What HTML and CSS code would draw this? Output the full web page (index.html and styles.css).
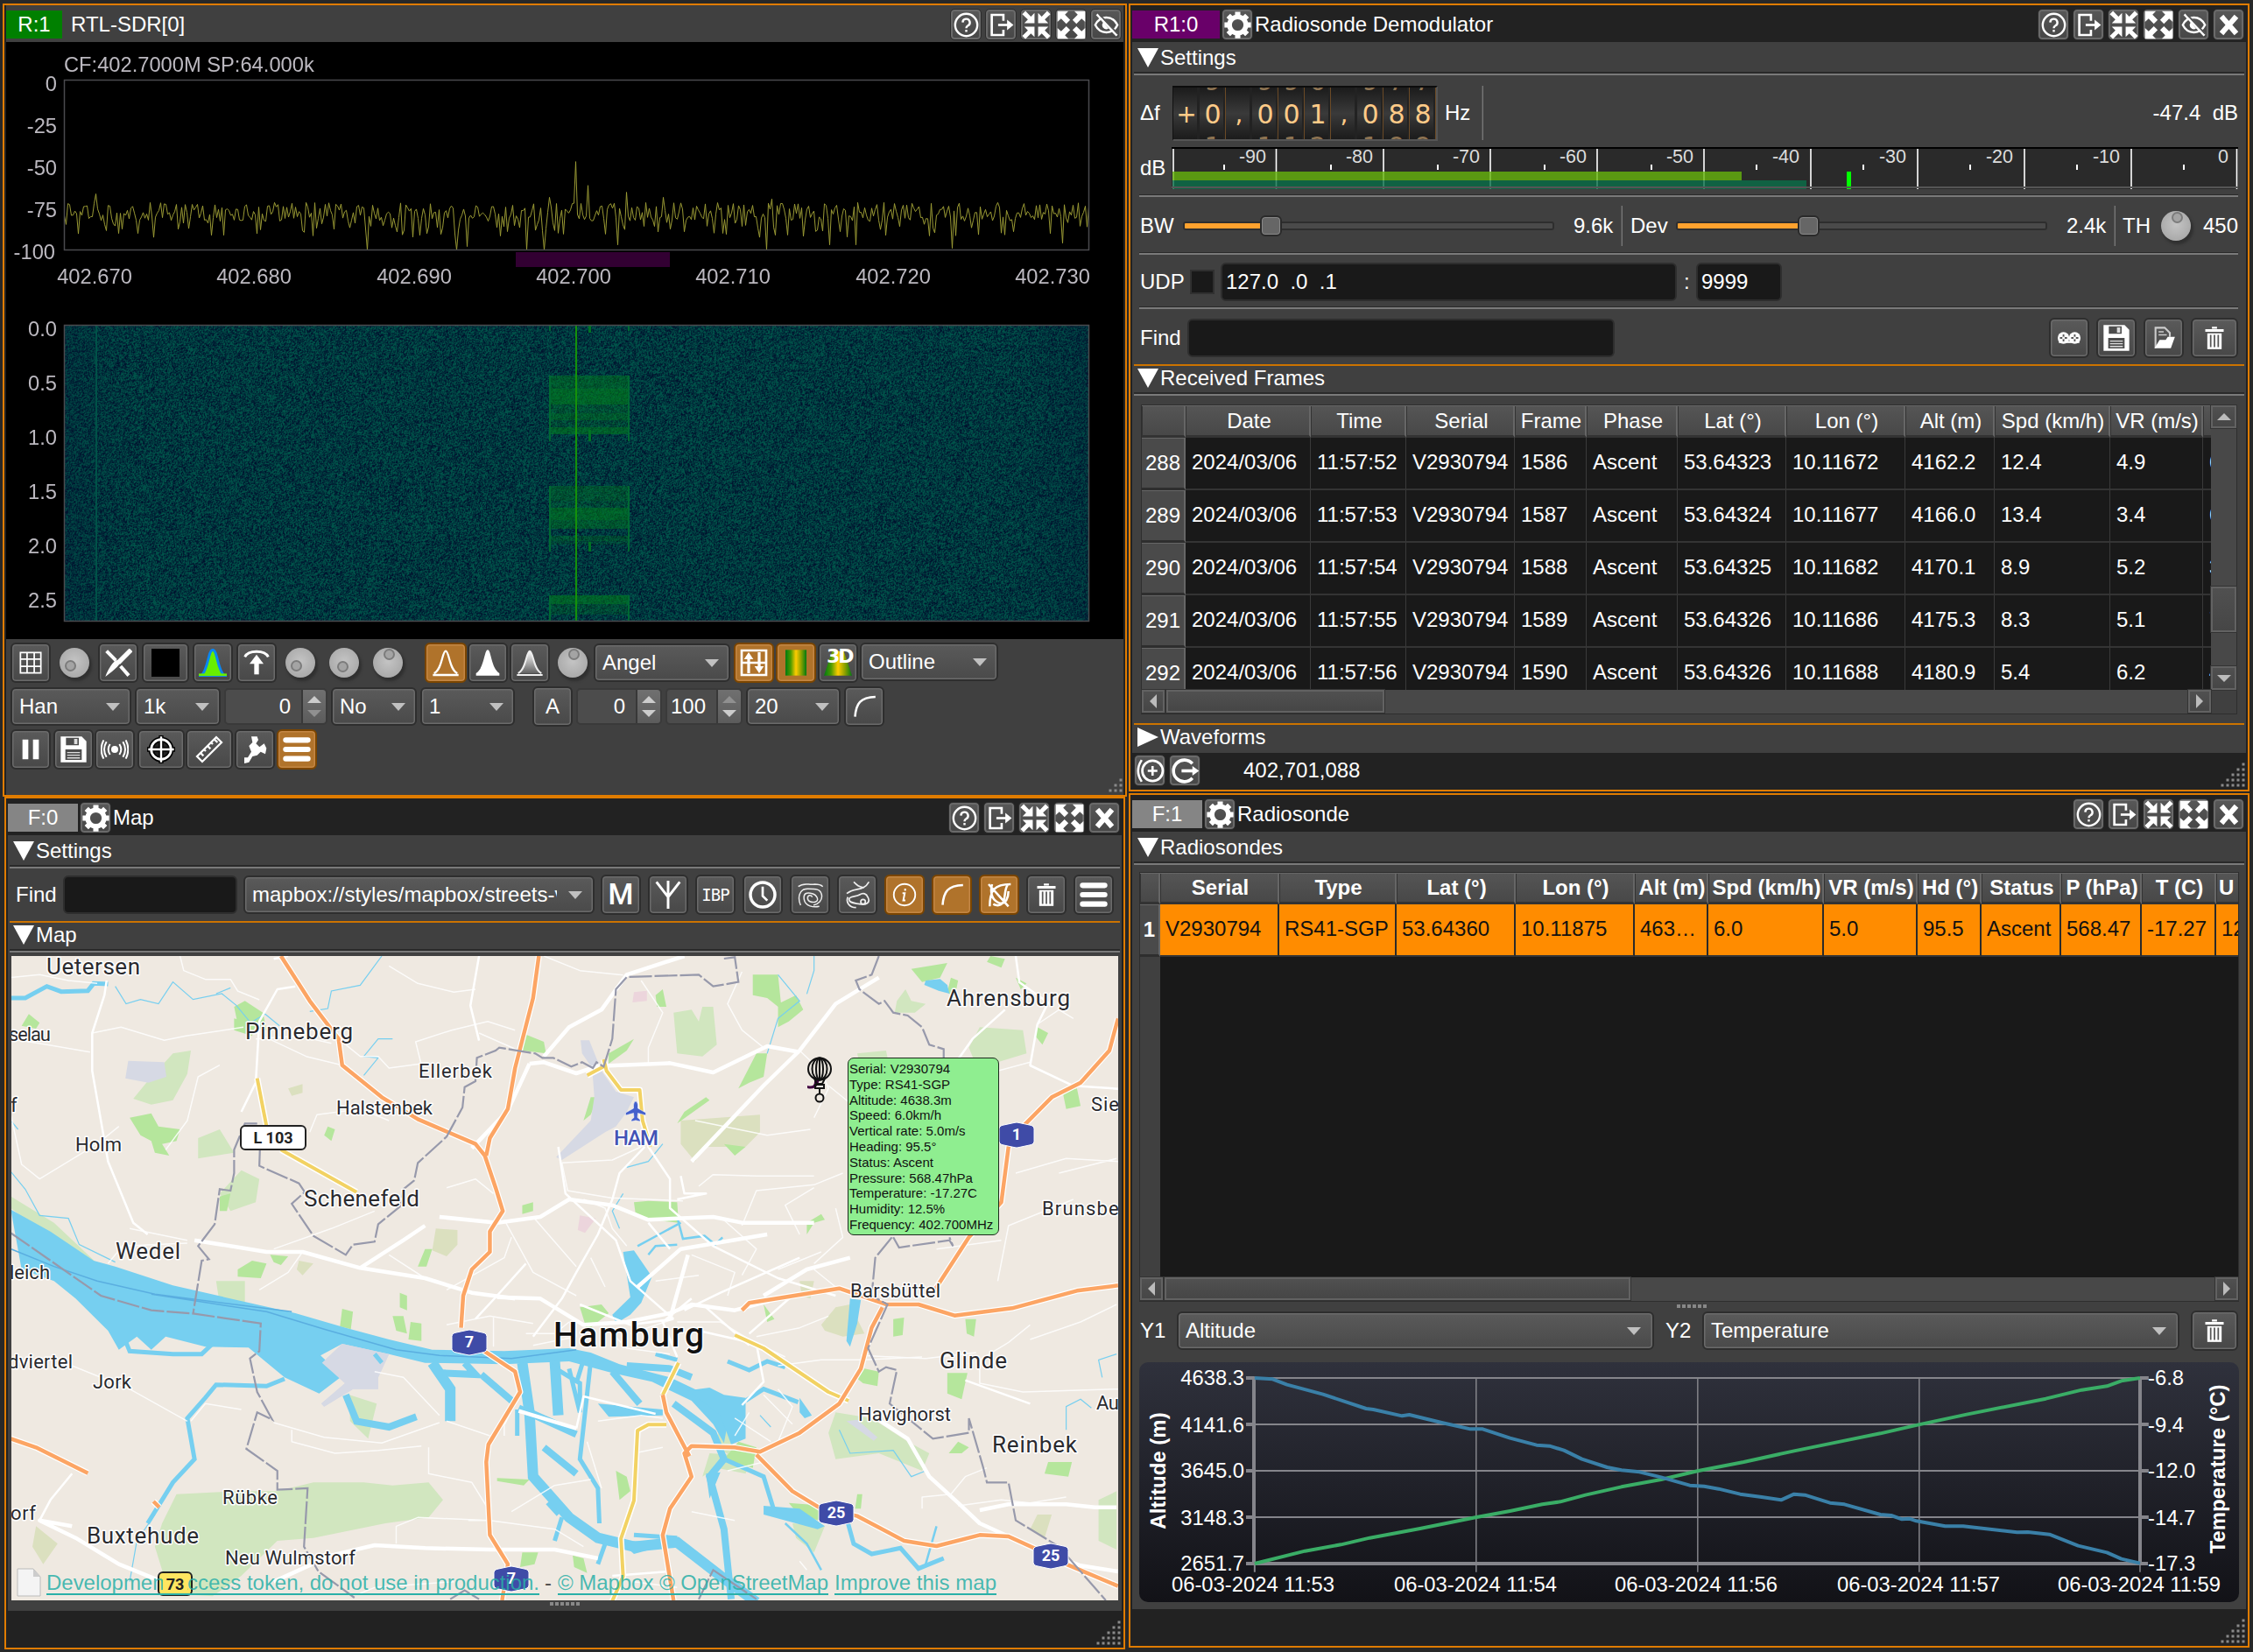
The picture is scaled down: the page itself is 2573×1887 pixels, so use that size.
FILE: index.html
```html
<!DOCTYPE html>
<html lang="en">
<head>
<meta charset="utf-8">
<title>SDR workspace</title>
<link rel="stylesheet" href="styles.css">
</head>
<body>
<svg class="defs" width="0" height="0" aria-hidden="true">
<defs>
<linearGradient id="peakFade" x1="0" y1="0" x2="0" y2="1"><stop offset="0" stop-color="#fff"/><stop offset="1" stop-color="#555"/></linearGradient>
<linearGradient id="heat"><stop offset="0" stop-color="#007a10"/><stop offset=".25" stop-color="#4a9a00"/><stop offset=".5" stop-color="#ffcc00"/><stop offset=".75" stop-color="#8aa000"/><stop offset="1" stop-color="#007a10"/></linearGradient>
<symbol id="help" viewBox="0 0 24 24"><circle cx="12" cy="12" r="10.500" fill="none" stroke="currentColor" stroke-width="2"/><path d="M8.600 9.600a3.400 3.400 0 1 1 4.800 3.200c-1 .5-1.400 1-1.400 2.300" fill="none" stroke="currentColor" stroke-width="2"/><path d="M11 16.600h2v2h-2z" fill="currentColor"/></symbol>
<symbol id="export" viewBox="0 0 24 24"><path d="M14 8V2.500H3v19h11v-5" fill="none" stroke="currentColor" stroke-width="2.200"/><path d="M9 12h10" stroke="currentColor" stroke-width="2.200"/><path d="M17.500 7l6 5-6 5z" fill="currentColor"/></symbol>
<symbol id="shrink" viewBox="0 0 24 24"><path d="M10.500 10.500V2L7.500 5 3 .3.300 3 5 7.500 2 10.500zM13.500 10.500V2l3 3L21 .3 23.700 3 19 7.500l3 3zM10.500 13.500V22l-3-3L3 23.700.3 21 5 16.500l-3-3zM13.500 13.500V22l3-3 4.500 4.700 2.700-2.700-4.700-4.500 3-3z" fill="currentColor"/></symbol>
<symbol id="expand" viewBox="0 0 24 24"><path d="M.5.5H9.500L6.700 3.500l4.300 4.300-3.200 3.200-4.300-4.300L.5 9.500zM23.500.5h-9l2.800 3L13 7.800l3.200 3.200 4.300-4.300 3 2.800zM.5 23.500h9l-2.800-3 4.300-4.300-3.200-3.200-4.300 4.300-3-2.800zM23.500 23.500h-9l2.800-3-4.300-4.300 3.200-3.200 4.300 4.300 3-2.800z" fill="currentColor"/></symbol>
<symbol id="hide" viewBox="0 0 24 24"><path d="M1.500 12C4 7 8 5 12 5s8 2 10.500 7C20 17 16 19 12 19s-8-2-10.500-7z" fill="none" stroke="currentColor" stroke-width="2"/><path d="M8 12a4 4 0 0 0 6 3.500L9 9z" fill="currentColor"/><path d="M3 2l19 20" stroke="currentColor" stroke-width="2.200"/><path d="M5 1.500l18 19" stroke="#555" stroke-width="1.500"/></symbol>
<symbol id="close" viewBox="0 0 24 24"><path d="M5 4l14 16M19 4L5 20" stroke="currentColor" stroke-width="5"/></symbol>
<symbol id="gear" viewBox="0 0 24 24"><circle cx="12" cy="12" r="6.800" fill="none" stroke="currentColor" stroke-width="4"/><path d="M12 1v4M12 19v4M1 12h4M19 12h4M4.200 4.200L7 7M17 17l2.800 2.800M4.200 19.800L7 17M17 7l2.800-2.800" stroke="currentColor" stroke-width="4.400"/></symbol>
<symbol id="grid" viewBox="0 0 24 24"><path d="M2 2h20v20H2zM2 8.500h20M2 15.500h20M8.500 2v20M15.500 2v20" fill="none" stroke="currentColor" stroke-width="1.500"/></symbol>
<symbol id="brush" viewBox="0 0 24 24"><path d="M2 2l8 8M14 15l7 8" stroke="currentColor" stroke-width="3"/><path d="M23 1L12 12" stroke="currentColor" stroke-width="4"/><path d="M13 10c2 3-3 7-12 14 2-6 6-12 9-14z" fill="currentColor"/></symbol>
<symbol id="swatch" viewBox="0 0 24 24"><path d="M0 0h24v24H0z" fill="#000"/></symbol>
<symbol id="phosphor" viewBox="0 0 24 24"><path d="M2 23C8 19 8 1 12 1s4 18 10 22z" fill="#68ee00" stroke="#0a86f2" stroke-width="2.200"/><path d="M0 22.300h24" stroke="#68ee00" stroke-width="2"/></symbol>
<symbol id="maxhold" viewBox="0 0 24 24"><path d="M2 7c3-6 17-6 20 0" fill="none" stroke="currentColor" stroke-width="2.200"/><path d="M12 22V10" stroke="currentColor" stroke-width="4"/><path d="M6 13l6-8 6 8z" fill="currentColor"/></symbol>
<symbol id="peak" viewBox="0 0 24 24"><path d="M2 21C9 18 9 2 12 2s3 16 10 19M1 22.500h22" fill="none" stroke="currentColor" stroke-width="1.700"/></symbol>
<symbol id="peakfill" viewBox="0 0 24 24"><path d="M2 23v-2C9 17 9 1 12 1s3 16 10 20v2z" fill="currentColor"/></symbol>
<symbol id="peakgrad" viewBox="0 0 24 24"><path d="M2 21C9 18 9 2 12 2s3 16 10 19M1 22.500h22" fill="url(#peakFade)" stroke="#eee" stroke-width="1.500"/></symbol>
<symbol id="updown" viewBox="0 0 24 24"><path d="M1.500 1.500h21v21h-21zM1.500 12h21" fill="none" stroke="currentColor" stroke-width="2"/><path d="M7.500 21V8M16.500 3v13" stroke="currentColor" stroke-width="2.400"/><path d="M3.500 9l4-6 4 6zM12.500 15l4 6 4-6z" fill="currentColor"/></symbol>
<symbol id="heatbar" viewBox="0 0 24 24"><path d="M3 1h18v22H3z" fill="url(#heat)"/></symbol>
<symbol id="threed" viewBox="0 0 24 24"><path d="M7 2h10l7 21H0z" fill="url(#heat)"/></symbol>
<symbol id="curve" viewBox="0 0 24 24"><path d="M3 22C4 9 8 3 23 2.500" fill="none" stroke="currentColor" stroke-width="2.200"/></symbol>
<symbol id="pause" viewBox="0 0 24 24"><path d="M5 3.500h5v17H5zM14 3.500h5v17h-5z" fill="currentColor"/></symbol>
<symbol id="save" viewBox="0 0 24 24"><path d="M1 1h18l4 4v18H1z" fill="currentColor"/><path d="M5.500 2h11v6.500h-11zM5 12h14v9H5z" fill="#4c4c4c"/><path d="M12.500 3h2.800v4.500h-2.800zM6.500 14.200h11v1h-11zM6.500 16.500h11v1h-11zM6.500 18.800h11v1h-11z" fill="#ddd"/></symbol>
<symbol id="radio" viewBox="0 0 24 24"><circle cx="12" cy="12" r="3" fill="currentColor"/><path d="M8 7.500q-3 4.500 0 9M16 7.500q3 4.500 0 9M5 5.500q-4 6.500 0 13M19 5.500q4 6.500 0 13M2.500 4q-4 8 0 16M21.500 4q4 8 0 16" fill="none" stroke="currentColor" stroke-width="1.500"/></symbol>
<symbol id="cross" viewBox="0 0 24 24"><circle cx="12" cy="12" r="8.500" fill="#222" stroke="#000" stroke-width="4.500"/><path d="M12 0v24M0 12h24" stroke="#000" stroke-width="4"/><circle cx="12" cy="12" r="8.500" fill="none" stroke="currentColor" stroke-width="2"/><path d="M12 1v22M1 12h22" stroke="currentColor" stroke-width="1.800"/></symbol>
<symbol id="ruler" viewBox="0 0 24 24"><path d="M1.500 18L18 1.500 22.500 6 6 22.500zM4.500 15l2.500 2.500M7.500 12l1.500 1.500M10.500 9l2.500 2.500M13.500 6L15 7.500M16.500 3.500L19 6" fill="none" stroke="currentColor" stroke-width="1.700"/></symbol>
<symbol id="wrench" viewBox="0 0 24 24"><path d="M3 24v-5h3l3-5-2-5 3-3-1-5 5 0 1 3-2 3 3 3 4-3 2 4-1 5-4-2-3 3-4 1-3 5z" fill="currentColor"/></symbol>
<symbol id="menu" viewBox="0 0 24 24"><path d="M2.500 4h19M2.500 12h19M2.500 20h19" stroke="currentColor" stroke-width="4.600" stroke-linecap="round"/></symbol>
<symbol id="reel" viewBox="0 0 24 24"><path d="M2 15h20v2H2z" fill="currentColor"/><circle cx="6.500" cy="12" r="5.700" fill="currentColor"/><circle cx="17.500" cy="12" r="5.700" fill="currentColor"/><path d="M6.500 8.500v7M3 12h7M17.500 8.500v7M14 12h7" stroke="#555" stroke-width="1.600"/><circle cx="6.500" cy="12" r="1.300" fill="#fff"/><circle cx="17.500" cy="12" r="1.300" fill="#fff"/></symbol>
<symbol id="folder" viewBox="0 0 24 24"><path d="M4 22V2h9l5 5v4" fill="none" stroke="#ccc" stroke-width="1.800"/><path d="M7 6h5M7 9h8" stroke="#ccc" stroke-width="1.400"/><path d="M3 22l5-8h6l2-3h7l-4 11z" fill="currentColor"/></symbol>
<symbol id="trash" viewBox="0 0 24 24"><path d="M9.500 1h5v2h-5zM3 3.500h18V6H3z" fill="currentColor"/><path d="M5 7.500h14V23H5z" fill="currentColor"/><path d="M8.300 9v12M12 9v12M15.700 9v12" stroke="#555" stroke-width="1.500"/></symbol>
<symbol id="antenna" viewBox="0 0 24 24"><path d="M12 24V0M2 1l10 13L22 1" fill="none" stroke="currentColor" stroke-width="2.200"/></symbol>
<symbol id="clock" viewBox="0 0 24 24"><circle cx="12" cy="12" r="10.500" fill="none" stroke="currentColor" stroke-width="2.600"/><path d="M12 5V13l4 4" fill="none" stroke="currentColor" stroke-width="2"/></symbol>
<symbol id="contour" viewBox="0 0 24 24"><path d="M2 5c5-4 9-1 14-2 4 0 6 1 7 2M4 21C1 14 3 7 10 7s11 0 12 5-3 8-7 9M20 22c-5 1-12 0-13-6s3-6 7-5 6 6 3 7-7 0-7-3 3-3 4-1" fill="none" stroke="currentColor" stroke-width="1.100" opacity=".9"/></symbol>
<symbol id="contour2" viewBox="0 0 24 24"><path d="M9 1c3 3 4 4 9 5M22 1c-5 9-12 4-19 10M4 14c-2 4 1 9 7 9M21 14c3 5-2 7-7 6s-9-1-9-4 6-2 9-4 6-1 7 2M15 18a2 2 0 1 0 4 0 2 2 0 1 0-4 0" fill="none" stroke="currentColor" stroke-width="1.300" opacity=".9"/></symbol>
<symbol id="info" viewBox="0 0 24 24"><circle cx="12" cy="12" r="10.500" fill="none" stroke="currentColor" stroke-width="1.600"/><path d="M12.600 6v2.200M10 10.500h2.200l-1.400 7h2" fill="none" stroke="currentColor" stroke-width="1.700"/></symbol>
<symbol id="nocurve" viewBox="0 0 24 24"><path d="M4 22C4 8 8 3 22 3M6 3c-2 7 0 14 6 16s8-5 8-10M3 3l17 19M20 3c-4 3-2 12-5 16s-8 1-8 1" fill="none" stroke="currentColor" stroke-width="1.900"/></symbol>
<symbol id="tune" viewBox="0 0 24 24"><circle cx="14" cy="12" r="8.500" fill="none" stroke="currentColor" stroke-width="2"/><path d="M14 8v8M10 12h8M5 3Q-1 12 5 21" fill="none" stroke="currentColor" stroke-width="1.900"/></symbol>
<symbol id="goto" viewBox="0 0 24 24"><path d="M18 6A9 9 0 1 0 18 18" fill="none" stroke="currentColor" stroke-width="2.600"/><path d="M9 12h11" stroke="currentColor" stroke-width="2.600"/><path d="M18 8l5.500 4-5.500 4z" fill="currentColor"/></symbol>
</defs>
</svg>

<main class="desktop">

<!-- Spectrum device window -->
<section class="win win-spectrum">
  <header class="titlebar light">
    <span class="badge green">R:1</span><h2 class="gap-l">RTL-SDR[0]</h2>
    <nav class="tools"><b class="tb"><svg><use href="#help"/></svg></b><b class="tb"><svg><use href="#export"/></svg></b><b class="tb"><svg class="big"><use href="#shrink"/></svg></b><b class="tb"><svg class="big"><use href="#expand"/></svg></b><b class="tb"><svg><use href="#hide"/></svg></b></nav>
  </header>
  <div class="plot">
    <canvas id="plot" width="1276" height="682"></canvas>
    <svg viewBox="7 48 1276 682" width="1276" height="682" class="plot-axes">
      <path d="M73.500 91.500h1170v194h-1170zM73.500 371.500h1170v338h-1170z" fill="none" stroke="#4a4a4e" stroke-width="1.500"/>
      <path d="M589 288h176v17H589z" fill="#320032"/>
      <text x="73" y="82">CF:402.7000M SP:64.000k</text>
      <g text-anchor="end"><text x="65" y="104">0</text><text x="65" y="152">-25</text><text x="65" y="200">-50</text><text x="65" y="248">-75</text><text x="63" y="296">-100</text>
      <text x="65" y="384">0.0</text><text x="65" y="446">0.5</text><text x="65" y="508">1.0</text><text x="65" y="570">1.5</text><text x="65" y="632">2.0</text><text x="65" y="694">2.5</text></g>
      <g text-anchor="middle"><text x="108" y="324">402.670</text><text x="290" y="324">402.680</text><text x="473" y="324">402.690</text><text x="655" y="324">402.700</text><text x="837" y="324">402.710</text><text x="1020" y="324">402.720</text><text x="1202" y="324">402.730</text></g>
    </svg>
  </div>
  <div class="panel spectrum-controls">
    <div class="ctl ctl-1">
      <b class="btn"><svg><use href="#grid"/></svg></b><i class="knob center"></i><b class="btn"><svg class="lg"><use href="#brush"/></svg></b><b class="btn w54"><svg class="sw"><use href="#swatch"/></svg></b><b class="btn"><svg class="lg"><use href="#phosphor"/></svg></b><b class="btn"><svg class="lg"><use href="#maxhold"/></svg></b><i class="knob"></i><i class="knob mid"></i><i class="knob top"></i><b class="btn on w48"><svg class="lg"><use href="#peak"/></svg></b><b class="btn"><svg class="lg"><use href="#peakfill"/></svg></b><b class="btn"><svg class="lg"><use href="#peakgrad"/></svg></b><i class="knob top"></i><span class="combo w156">Angel</span><b class="btn on"><svg class="lg"><use href="#updown"/></svg></b><b class="btn on"><svg class="lg"><use href="#heatbar"/></svg></b><b class="btn"><svg class="lg"><use href="#threed"/></svg><em class="d3">3D</em></b><span class="combo w158 up">Outline</span>
    </div>
    <div class="ctl ctl-2">
      <span class="combo">Han</span><span class="combo">1k</span><span class="spin dn-off">0<i></i></span><span class="combo">No</span><span class="combo scale">1</span><b class="btn">A</b><span class="spin">0<i></i></span><span class="spin up-off">100<i></i></span><span class="combo">20</span><b class="btn"><svg><use href="#curve"/></svg></b>
    </div>
    <div class="ctl ctl-3">
      <b class="btn"><svg class="lg"><use href="#pause"/></svg></b><b class="btn"><svg class="lg"><use href="#save"/></svg></b><b class="btn"><svg class="lg"><use href="#radio"/></svg></b><b class="btn w54"><svg class="lg"><use href="#cross"/></svg></b><b class="btn w54"><svg class="lg"><use href="#ruler"/></svg></b><b class="btn"><svg class="lg"><use href="#wrench"/></svg></b><b class="btn on"><svg class="lg"><use href="#menu"/></svg></b>
    </div>
  </div>
  <svg class="grip" viewBox="0 0 18 18" width="18" height="18"><path d="M14 2h0M8 8h0M14 8h0M2 14h0M8 14h0M14 14h0"/></svg>
</section>

<!-- Demodulator window -->
<section class="win win-demod">
  <header class="titlebar">
    <span class="badge purple">R1:0</span><b class="tb gearbtn"><svg class="big"><use href="#gear"/></svg></b><h2>Radiosonde Demodulator</h2>
    <nav class="tools"><b class="tb"><svg><use href="#help"/></svg></b><b class="tb"><svg><use href="#export"/></svg></b><b class="tb"><svg class="big"><use href="#shrink"/></svg></b><b class="tb"><svg class="big"><use href="#expand"/></svg></b><b class="tb"><svg><use href="#hide"/></svg></b><b class="tb"><svg><use href="#close"/></svg></b></nav>
  </header>
  <div class="panel">
    <h3 class="fold">Settings</h3>
    <div class="row row-freq">
      <label>Δf</label>
      <div class="wheel"><span class="plain">+</span><span data-up="9" data-down="1">0</span><span class="plain">,</span><span data-up="9" data-down="1">0</span><span data-up="9" data-down="1">0</span><span data-up="0" data-down="2">1</span><span class="plain">,</span><span data-up="9" data-down="1">0</span><span data-up="7" data-down="9">8</span><span data-up="7" data-down="9">8</span></div>
      <span class="unit">Hz</span><i class="vline"></i><span class="power">-47.4&nbsp; dB</span>
    </div>
    <div class="row row-meter">
      <label>dB</label>
      <svg class="meter" viewBox="1338 168 1218 48" width="1218" height="48">
        <path d="M1338 168h1218v48H1338z" fill="#2a2a2a"/><path d="M1338 169h1218" stroke="#000" stroke-width="2"/>
        <path d="M1340 170v46M1457.500 170v46M1580 170v46M1702 170v46M1824 170v46M1946 170v46M2068 170v46M2190 170v46M2312 170v46M2434 170v46M2554.500 170v46" stroke="#fff" stroke-width="1.600"/>
        <path d="M1398 188v6M1520 188v6M1642 188v6M1764 188v6M1886 188v6M2006 188v6M2128 188v6M2250 188v6M2372 188v6M2494 188v6" stroke="#fff" stroke-width="2"/>
        <path d="M1339 196h650v10h-650z" fill="#67b50ccc"/><path d="M1339 206h724v10h-724z" fill="#0a704acc"/>
        <path d="M2111.500 196v20" stroke="#0f0" stroke-width="5"/><path d="M1338 214h1218" stroke="#555" stroke-width="2"/>
        <g text-anchor="end"><text x="1446" y="186">-90</text><text x="1568" y="186">-80</text><text x="1690" y="186">-70</text><text x="1812" y="186">-60</text><text x="1934" y="186">-50</text><text x="2055" y="186">-40</text><text x="2177" y="186">-30</text><text x="2299" y="186">-20</text><text x="2421" y="186">-10</text><text x="2545" y="186">0</text></g>
      </svg>
    </div>
    <hr>
    <div class="row row-bw">
      <label>BW</label><div class="slider s1"><i></i></div><span class="val">9.6k</span><i class="vline"></i><label class="dev">Dev</label><div class="slider s2"><i></i></div><span class="val">2.4k</span><i class="vline"></i><label class="th">TH</label><i class="knob top"></i><span class="thv">450</span>
    </div>
    <hr>
    <div class="row row-udp">
      <label>UDP</label><i class="check"></i><span class="input ip">127.0&nbsp; .0&nbsp; .1</span><span class="colon">:</span><span class="input port">9999</span>
    </div>
    <hr>
    <div class="row row-find">
      <label>Find</label><span class="input"></span><div class="actions"><b class="btn"><svg><use href="#reel"/></svg></b><b class="btn"><svg class="lg"><use href="#save"/></svg></b><b class="btn"><svg><use href="#folder"/></svg></b><b class="btn w54"><svg><use href="#trash"/></svg></b></div>
    </div>
    <h3 class="fold split">Received Frames</h3>
    <div class="frames">
      <div class="view">
      <table>
        <colgroup><col class="c0"><col class="c1"><col class="c2"><col class="c3"><col class="c4"><col class="c5"><col class="c6"><col class="c7"><col class="c8"><col class="c9"><col class="c10"><col class="c11"></colgroup>
        <thead><tr><th></th><th>Date</th><th>Time</th><th>Serial</th><th>Frame</th><th>Phase</th><th>Lat (°)</th><th>Lon (°)</th><th>Alt (m)</th><th>Spd (km/h)</th><th>VR (m/s)</th><th class="cut">H</th></tr></thead>
        <tbody>
        <tr><th>288</th><td>2024/03/06</td><td>11:57:52</td><td>V2930794</td><td>1586</td><td>Ascent</td><td>53.64323</td><td>10.11672</td><td>4162.2</td><td>12.4</td><td>4.9</td><td>6</td></tr>
        <tr><th>289</th><td>2024/03/06</td><td>11:57:53</td><td>V2930794</td><td>1587</td><td>Ascent</td><td>53.64324</td><td>10.11677</td><td>4166.0</td><td>13.4</td><td>3.4</td><td>6</td></tr>
        <tr><th>290</th><td>2024/03/06</td><td>11:57:54</td><td>V2930794</td><td>1588</td><td>Ascent</td><td>53.64325</td><td>10.11682</td><td>4170.1</td><td>8.9</td><td>5.2</td><td>3</td></tr>
        <tr><th>291</th><td>2024/03/06</td><td>11:57:55</td><td>V2930794</td><td>1589</td><td>Ascent</td><td>53.64326</td><td>10.11686</td><td>4175.3</td><td>8.3</td><td>5.1</td><td>7</td></tr>
        <tr><th>292</th><td>2024/03/06</td><td>11:57:56</td><td>V2930794</td><td>1590</td><td>Ascent</td><td>53.64326</td><td>10.11688</td><td>4180.9</td><td>5.4</td><td>6.2</td><td>4</td></tr>
        </tbody>
      </table>
      </div>
      <div class="vbar"><b class="au"></b><b class="thumb"></b><b class="ad"></b></div>
      <div class="hbar"><b class="al"></b><b class="thumb"></b><b class="ar"></b></div>
    </div>
    <h3 class="fold split shut">Waveforms</h3>
  </div>
  <footer><b class="tb"><svg class="big"><use href="#tune"/></svg></b><b class="tb"><svg class="big"><use href="#goto"/></svg></b><span>402,701,088</span></footer>
  <svg class="grip" viewBox="0 0 30 30" width="30" height="30"><path d="M26 2h0M20 8h0M26 8h0M14 14h0M20 14h0M26 14h0M8 20h0M14 20h0M20 20h0M26 20h0M2 26h0M8 26h0M14 26h0M20 26h0M26 26h0"/></svg>
</section>

<!-- Map window -->
<section class="win win-map">
  <header class="titlebar">
    <span class="badge gray">F:0</span><b class="tb gearbtn"><svg class="big"><use href="#gear"/></svg></b><h2>Map</h2>
    <nav class="tools"><b class="tb"><svg><use href="#help"/></svg></b><b class="tb"><svg><use href="#export"/></svg></b><b class="tb"><svg class="big"><use href="#shrink"/></svg></b><b class="tb"><svg class="big"><use href="#expand"/></svg></b><b class="tb"><svg><use href="#close"/></svg></b></nav>
  </header>
  <div class="panel">
    <h3 class="fold">Settings</h3>
    <div class="row row-mapfind">
      <label>Find</label><span class="input"></span><span class="combo"><span>mapbox://styles/mapbox/streets-v12</span></span>
      <div class="actions"><b class="btn"><em class="mm">M</em></b><b class="btn"><svg class="lg"><use href="#antenna"/></svg></b><b class="btn"><em class="ibp">IBP</em></b><b class="btn"><svg class="lg"><use href="#clock"/></svg></b><b class="btn"><svg class="lg"><use href="#contour"/></svg></b><b class="btn"><svg class="lg"><use href="#contour2"/></svg></b><b class="btn on"><svg><use href="#info"/></svg></b><b class="btn on"><svg><use href="#curve"/></svg></b><b class="btn on"><svg class="lg"><use href="#nocurve"/></svg></b><b class="btn"><svg><use href="#trash"/></svg></b><b class="btn"><svg class="lg"><use href="#menu"/></svg></b></div>
    </div>
    <h3 class="fold split">Map</h3>
    <div class="map">
      <svg viewBox="13 1092 1264 736" width="1264" height="736">
        <path d="M0 1080h1290v760H0z" fill="#efe9e1"/>
        <g transform="translate(0 1080) scale(.8227 .33333)" class="geo">
          <g class="park">
            <path d="M240 370l25-10-5 80-20 90-30 15-25-20 20-60zM935 230l25-10 10 40 5-50 15 0 5 130-20 40-35-10zM1360 280l60 10 5 80-40 30-10 100-30 30-10-60 20-60-10-60zM1245 190l12-40 8 40 20 10-15 30-28 0zM335 770l25 30-5 80-35 30-15-60zM275 660l30-30 20 80-50 20zM1190 370l40-10 5 60-40 10zM300 1150l40 0 0 100-35-20zM15 860l60 90 60 140-30-20-90-170z"/>
            <path d="M245 1880l80-10 60 0 50-30 70 0 40 10 50-10 20 60-20 60-60 20-100 50-50 10-50 120-40 70-60-10-20-160 10-80zM485 1540l38 30-12 120-25-60zM985 1740l60 10-10 60-40-20-20 30zM1160 1600l50 20 50 80 30 40-10 60-60-60-60 20-10-90zM1000 1600l20 60-5 90-20-30zM290 1285l75 10 0 50-70-15zM120 1215l50 10-15 50-30-20zM1100 1980l45 10-15 90-25-50zM1525 1900l25-30v200l-25-30z"/>
          </g>
          <g class="khaki"><path d="M945 600l110-20 0 60-20 50-60 0-10 50-20-60zM400 490l20-15 0 30-15 10zM605 970l30 5 0 50-15 40-20-20zM50 1990l30 60-20 70-15-60zM1140 1300l20-60 20-10 20 100-30 10-25-20zM415 1080l20 10-15 40-8-20zM1110 1150l20 0-5 60-12-10zM1440 1950l20 0-10 80-20-30z"/></g>
          <g class="wood">
            <path d="M325 210l15-20 25 40 5 60-40-20zM325 250l30 20-5 40-25-20zM40 235l15 30-5 20-20-10zM180 590l30-15 10 45 30 10-5 40-20 10 10 40-20-10-5-40-15-20zM455 620l10 10-5 40-10-20zM725 300l30 30 3 40-32-10zM1045 100l35 0 5 120-20-40-20-10zM1265 80l50-20-10 50-25 15zM1320 110l10 10-5 60-10-20zM910 170l10-20 5 60-13 0zM845 370l35-50-10 40-25 45zM880 880l20-5 40 5 2 70-40-10-20-25zM950 570l30-50 5 10-45 80zM1050 370l15 0-5 80-20 20-15 20zM1005 680l30 10-15 30zM330 1110l20-30 20 10-8 50-32-5zM375 1060l25 5-10 30-10-10zM590 1040l10 0-8 60-12 0zM555 1190l10 10 0 50-10-10zM725 890l15-10 0 30-15 10zM1120 950l20-30 5 20-15 10-10 40zM1440 280l15 20-8 40-10-30zM1475 500l20-10 5 60-20 10zM305 860l15-10-5 60-10 0zM1410 110l15 20-8 20zM1375 36l20 10-5 30-20-20zM1080 200l25-30 10 50-20 40-15 20zM820 520l10 0-10 60-10 20z"/>
            <path d="M475 1245l15 10-3 60-15-10zM545 1270l15 0 5 60-15-10zM570 1290l15 5v60l-18-5zM805 1240l30-10 10 30-30 60zM1240 1280l15-5-2 60-13 5zM1340 1280l15 0-3 60-10-10zM1315 1465l28 0-8 90-20-20zM1200 1450l20 10-2 50-20-10-10-20zM1330 1700l15 20-10 20-18 0zM1455 1770l33 0-5 50-33-10zM690 1825l45 5-8 20-37-15zM855 1800l15 20 5 50-15 30zM725 2080l22 0-5 40-20 10zM1095 1910l50 10-10 50-30-30zM1190 1880l7 0-2 50-8 0zM795 2090l15 10 5 50-18-20zM1060 1230l15 50-10 10zM1005 1760l20-60 25 20-5 70z"/>
          </g>
          <g class="pink"><path d="M880 160l18-5 0 35-20 5zM805 925l22 10-15 50-10-10z"/></g>
          <g class="aero"><path d="M806 325h12l17 105 20 70 25 20-10 50-15 50-15 20-60 95-8-10 48-125 5-80-3-100-14-50zM178 395l50 5 3 50-25 20-32-15zM475 1365l65 35-15 80 0 40-35 0-40 60-4-10 33-70-32-70zM1175 1630l15-5 28 60-5 12z"/></g>
          <g class="sea">
            <path d="M15 905l55 75 60 100 30 20 80 65 170 95 70 50 60 40 60 35 100 5 90-10 30 15 40 40 70 45 60 70 20 90-5 65-15-65-30-80-55-65-55-30-60-40-90 10-110-5-50-30-65-35-30 40 30 70-32 60-48-55-50-102-60-3-55-35-20 45-20-45-25 45-15-65-45-110-30-60-45-40z"/>
            <path d="M865 1050l15-5 25 90-15 90-15 40-20 30-5-30 25-60zM1285 120l20-5 10 20 3 30-15-10-20-20zM1060 1920l50 10 35 60-10 10-75-50zM955 1525l30-10 20 25 30 10 0 140-20 20-15-100zM830 1570l90 20 0 20-75 5zM1180 1210l15 5-5 80-10 80-5-20zM980 1810l20-5-15 90zM860 2040l80 5-60 40zM1110 1550l17 60-10 10-7-20z"/>
          </g>
          <g class="aero"><path d="M475 1365l65 35-15 80 0 40-35 0-40 60-4-10 33-70-32-70z"/></g>
          <g class="chan">
            <path stroke-width="12" d="M600 1430l25 90v110M725 1430l10 170 5 220 50 140 40 70 50 30 60-15 60 115 50 90M770 1420l5 190"/>
            <path stroke-width="8" d="M850 1460l38 110M645 1430l15 40-45-5M668 1470l47 100M720 1585l80 90M480 1540l15 90 45 20 38-35M1005 1760l-20 60 20 180 10 240M935 1570l55 100 15 90M870 1440l60 10 30 30M755 1720l45 90"/>
            <path stroke-width="5" d="M820 1425l-15 335 25 100 2 120M1005 1760l55 60 15 120M1175 1960l10 90 25 35 40-20 25 70 35-35M395 1485l-25 25-70-5-15 45-25 70 10 140-30 80-35 140M15 180h20l30-40 20 18 37-3 8-25 20 2M790 1450l15 150M765 1440l40 60 0 100M175 1360l5 30 60 10 40 0 15-35M1035 1560l25-40 48 45M1010 1425l30 30 25-30 25 20M840 2050l-10 70M940 2030l-60-10M780 1960l-10 80M760 1910l15 40M718 1590l0 90M740 1600l55 60M800 1500l10-80M520 1400l10 30M910 1400l30 20"/>
            <path stroke-width="2.500" d="M940 930l8 75 30-10 15 30 10-25M945 950l-30 40-30 40M900 1060l10-30 30-5M1300 1990l-15 130M1090 1980l30 70 20 90"/>
            <path stroke-width="1.200" d="M160 140l15 60 20-15 25 15 20-75 28 60 40-20 20 40 20 60 20-30 20 40M530 36l-30 100-40 20-5 60-25 10M300 165l20-20M545 320l-20 0-20 60 20 5-20 60M865 850l-15 60 10 60M15 775l20 60 20 90 40 10 15 90 50 60M1080 100l30 90-30 60-15 120M1130 36l0 50-10 80M1165 1660l15 80 60-10 25 90 20-20M180 2180l10-140 25-90M870 760l30-20 20-60M1070 1650l-15-40M15 600l10 30M1480 1660l0-80 20-25 15 30M1530 1480l-5-60 25-20"/>
          </g>
          <path class="river" d="M210 1195l80 30 80 30 80 60 100 70 60 20 100 10 90-30M15 1040l60 60 60 50 80 45 190 60"/>
          <g class="minor">
            <path d="M250 36l5 50 30 30 35 0 10 40 30 30M15 110l40-10 40 20 40 10M128 300l40-20 60 45 30-15 80-30M355 320l60-10 45 25M470 320l30 60 25 0 15 40 45-15M585 410l-8-80 50-40 50-30 38 30M665 300l55 60M475 410l-50-30-60-70M540 70l40 60 50 30 30-10M755 36l50 50 60 15M15 320l50 20 60 25M15 580l15 170 25 50 40-60 40-60 30-60M230 700l30-100 15-150 30-40M430 640l10-60 60-20 40 40M620 830l40-30 25 50M780 745l70-10 40-45M780 745l8 95 60 25 100 10M810 870l30 30 10 70 20 60M965 600l100 50 60-20M1060 350l-30-60-20-90 20-110M1130 590l20-100-10-60-30-70M890 120l30 110-20 120 0 60M1030 960l20-120 80-20 40-40M1130 790l-80 0-60-5-20 40M1000 930l50 110-20 90M1110 990l-20-100 40-60M620 1180l80-110 10-70M700 940l40 180 60 80M740 930l60 170M540 1060l50 80M180 970l80 40M150 1090l20-60 90-10M420 1050l-20 70-40 60M380 1040l80-70 60-60M1180 540l-30-60M1440 270l30-50 20 30M1430 400l-90 60M1470 780l80-50M1410 780l70-50 72 10M1490 870l-60 60-30 30-15 190M1300 1040l90-30M1160 900l10 100-40 90M1080 1110l60-60M960 1060l60 60-10 80M910 1150l60-20M820 1070l20 100M1130 1110l30 60"/>
            <path d="M620 1300l60-30 60 25M685 1275l0 100M640 1400l-10-70M730 1330l40 0 20-40M740 1370l60-30 0-60M850 1330l20 50 60 20M935 1280l-60 50M940 1290l60 0 40 60 50 60M1050 1340l60-30 40-40M1080 1440l60-20 60 0 80-10M1195 1405l90 10 70-20M1430 1300l-30 60-40 60 0 80 60 30 132-10M1550 1230l-50 60-70 60M100 1440l80 80 80 110M265 1630l20-60 50 20M380 1635l70 50 80 20 80-70M520 1460l40 20 50 130M405 1660l0 40 60 40 60-10 60-15M595 1720l0 90 60 30 20 80M650 1970l30 0 90 30M770 1850l50-20M770 1850l-60 90M815 1700l10 80 10 80M830 1630l60-20 30 10M880 1740l40-20M1020 1620l50 80M1040 1600l-20 80M1080 1520l20 60-20 120-30 40M1100 1640l-40-100M1280 1930l0-40 40-10 20-60 30-30M1330 1920l60-20 40 10 50-20M960 1940l60 30M1010 1800l50-30M1110 2110l10 30M550 2050l0-60 30-30 100 10M770 2000l40 60M880 2180l60 20M700 1640l0 40M500 2220l20-20 110-20M620 1630l60 50"/>
          </g>
          <g class="roads">
            <path d="M148 120l-3 50-17 130v130l22 310 35 210 20 40M410 140l-25 10-25 110-5 210-20 100M400 36l-20 10M665 36l-12 170 12 120M1410 36l5 90 40 70-15 75-10 140 60 70 62 10M1395 220l-45 100-20 70M895 690l-35 90-10 90-20 120-30 130-20 90-40 130M900 690l30 110v100l60 130 90 110 80 60M775 690l10 160 70 160 20 140 60 130M940 870l40-20-30 0-5-60M930 1040l-30-90M1110 1070l-110 120-50 60M730 1090l-40 110-30 80"/>
            <path class="wide" d="M735 405l20-5 45 38 30-25 100-10 60 32 75-90 45 20M735 405l-30 160-50 130M950 36l-80 64-35 120-45 60-35 100M1220 110l-60 90-50 160-50 120-50 130-50 130M610 930l80 20 60-20 40-60 60 20 50 50 90-10 40 20 100 0M270 1010l100 40h50l80 55 90 35 65 50 60 20M500 1105l60-95 30-50M1065 990l-120 50-60 130M1060 1200l60-90 60-40M955 1060l-25 220"/>
            <path class="wide" d="M690 1205l60 5 60 90 60-10 60-30 30-30 60 20 60-40M720 1595l80 60M1210 1610l50 80 30 130 40 90 30 70 80 90 60 55 52 20M1360 1935l40-20 80 0 40 10 30 0M100 1990l0 0-45-20 50 60 60 90 60 60M380 2180l80-90 60-35 70 10 90 5 90 0 60 30"/>
            <path d="M935 1280l-60 20-70-70M940 1410l-20-120 40-80M1040 1370l-60-130M970 1320l80 45 10 130-30 80M800 1655l10-110 100 60M700 1640l10-50M100 1810l-30 90-15 70M850 2160l80-15M1430 1570l-90-80M1100 1200l-60 130"/>
          </g>
          <path class="yel case" d="M357 455l13 165M390 700l105 145M838 390l4 40 20 65h26l4 105 11 90M815 445l23-30M1020 1335l40 45 90 150 28 30M942 1430l-22 110M925 1642h-25l-15 20-5 240-18 130 3 130-15 84"/>
          <path class="yel" d="M357 455l13 165M390 700l105 145M838 390l4 40 20 65h26l4 105 11 90M815 445l23-30M1020 1335l40 45 90 150 28 30M942 1430l-22 110M925 1642h-25l-15 20-5 240-18 130 3 130-15 84"/>
          <path class="moto case" d="M390 36l40 154 40 130 5 90 55 110 50 75 80 85 13 40 15 110 10 80-18 70 0 70-25 60-12 90-3 110M748 36l-8 144-25 240-10 140-25 100-5 60M660 1370l55 90 7 70-22 90-22 90-3 60 5 250 25 100-8 124M1552 250l-12 110-40 110-40 50-40 100-20 70-10 190-45 120-50 190M1225 1240l-15 70-15 140-30 120-55 100-55 65-35-15-60-5-10 25 10 80-30 110-10 90 15 224M920 1540l5 60 32 150M1050 1745l50 125 40 60 50 25 65 85 45 18 60-38 40 5 40 45 40 50 72 75M1030 1250l10-25 125-50 65 55h45l50 38 80-25 90-60 57-18M15 1690l35 30 72 88M213 1905l8 20"/>
          <path class="moto" d="M390 36l40 154 40 130 5 90 55 110 50 75 80 85 13 40 15 110 10 80-18 70 0 70-25 60-12 90-3 110M748 36l-8 144-25 240-10 140-25 100-5 60M660 1370l55 90 7 70-22 90-22 90-3 60 5 250 25 100-8 124M1552 250l-12 110-40 110-40 50-40 100-20 70-10 190-45 120-50 190M1225 1240l-15 70-15 140-30 120-55 100-55 65-35-15-60-5-10 25 10 80-30 110-10 90 15 224M920 1540l5 60 32 150M1050 1745l50 125 40 60 50 25 65 85 45 18 60-38 40 5 40 45 40 50 72 75M1030 1250l10-25 125-50 65 55h45l50 38 80-25 90-60 57-18M15 1690l35 30 72 88M213 1905l8 20"/>
          <path class="border" d="M1005 45l15-5 5 85-35 15-20-40-100 8-15 42-5 170-12 95-10-15-5 20-15-20-15 15-25-30-15 0-10-15-50-20-5 10-26 25-2 80-15 20-3 70-22 100-40 90-5 60-15 30-5 60-30 60-5 60-30 10-10 35-45-65-30-110 18-40-8-30-55-60 2-140M357 610l-17 0-15 90 0 80-5 60-15-5-7 120-23 75 15 45-10 5-12 182M15 985l125 215 70 50 60 12 92 33-2 95-13 25 10 115 21 95-21-25-15 125 43 75 0 65 42-5-5 200 20 85 50 90M1220 36l-10 64-22 20 5 30 27 50 8-10 12 40 20 10 20 40 10 60 20 15v45M1240 1000l8 35 70-25 5 20-5-30M1238 1000l-23 70-5 130 22 30-27 150 15 80 10-15 15 10-10 115 60 120 50-20 0-50 20 170 5 50 30 0 10 130 60 90 65 184M625 2240l20-30 20 30M970 2240l20-100 60 100"/>
        </g>
        <g class="towns">
          <text x="53" y="1113" textLength="107">Uetersen</text><text x="280" y="1187" textLength="123">Pinneberg</text><text x="1081" y="1149" textLength="141">Ahrensburg</text><text x="347" y="1378" textLength="132">Schenefeld</text><text x="132" y="1438" textLength="74">Wedel</text><text x="1073" y="1563" textLength="77">Glinde</text><text x="1133" y="1659" textLength="97">Reinbek</text><text x="99" y="1763" textLength="128">Buxtehude</text>
        </g>
        <g class="towns small">
          <text x="10" y="1189" textLength="48">selau</text><text x="478" y="1231" textLength="84">Ellerbek</text><text x="384" y="1273" textLength="110">Halstenbek</text><text x="86" y="1315" textLength="53">Holm</text><text x="11" y="1461" textLength="46">leich</text><text x="1246" y="1269" textLength="32">Sie</text><text x="1190" y="1388" textLength="100">Brunsbek</text><text x="971" y="1482" textLength="103">Barsbüttel</text><text x="12" y="1270">f</text><text x="9" y="1563" textLength="74">dviertel</text><text x="106" y="1586" textLength="44">Jork</text><text x="980" y="1623" textLength="106">Havighorst</text><text x="1252" y="1610" textLength="26">Au</text><text x="254" y="1718" textLength="63">Rübke</text><text x="12" y="1736" textLength="29">orf</text><text x="257" y="1787" textLength="149">Neu Wulmstorf</text>
        </g>
        <text class="city" x="632" y="1538" textLength="172">Hamburg</text>
        <text class="airport" x="701" y="1308" textLength="51">HAM</text>
        <path class="plane" d="M726 1258q2 0 2.500 4v4l9 5v3l-9-2.500-.5 5 3 2.500v2l-5-1.200-5 1.200v-2l3-2.500-.5-5-9 2.500v-3l9-5v-4q.5-4 2.500-4z"/>
        <g class="shield">
          <rect x="275" y="1286" width="74" height="27" rx="5" fill="#fff" stroke="#222" stroke-width="2"/><text x="312" y="1306" class="dark">L 103</text>
          <g fill="#3f4ba7" stroke="#fff" stroke-width="1"><path id="hex" d="M1158 1282.500q3-1 6 0l14 3q3 1 3 4v14q0 3-3 4l-14 3q-3 1-6 0l-14-3q-3-1-3-4v-14q0-3 3-4z"/><use href="#hex" x="-625" y="237"/><use href="#hex" x="-577" y="507"/><use href="#hex" x="-206" y="432"/><use href="#hex" x="39" y="481"/></g>
          <text x="1161" y="1302">1</text><text x="536" y="1539">7</text><text x="584" y="1809">7</text><text x="955" y="1734">25</text><text x="1200" y="1783">25</text>
        </g>
        <g class="shield"><rect x="181" y="1796" width="38" height="26" rx="5" fill="#ffe560" stroke="#222" stroke-width="2"/></g>
        <g class="credit">
          <path d="M20 1792h18l8 9v22H20z" fill="#f4f4f4" stroke="#bbb"/><path d="M38 1792v9h8z" fill="#ccc"/>
          <text x="53" y="1816" textLength="563">Development access token, do not use in production.</text><text x="622" y="1816" class="dash">-</text><text x="637" y="1816" textLength="309">© Mapbox © OpenStreetMap</text><text x="953" y="1816" textLength="185">Improve this map</text>
          <path d="M53 1821h563M637 1821h309M953 1821h185" stroke="#2ab0a8" stroke-width="2"/>
        </g>
        <g class="shield"><path d="M186 1798h28v22h-28z" fill="#ffe560"/><text x="200" y="1816" class="dark">73</text></g>
        <g fill="none" stroke="#111" stroke-width="2"><path d="M922 1240q8 2 8-4t6-3l-2 6q-4 6-12 4z" fill="#400040" stroke="none"/><ellipse cx="936" cy="1221" rx="13" ry="12.500" fill="#e8e4dc"/><ellipse cx="936" cy="1221" rx="8.500" ry="12.500"/><path d="M936 1209v24"/><ellipse cx="936" cy="1221" rx="4" ry="12.500"/><path d="M930 1232l3 6h6l3-6M931 1239h10v4h-10zM936 1243v7"/><circle cx="936" cy="1254" r="4.500"/></g>
      </svg>
      <ul class="callout"><li>Serial: V2930794</li><li>Type: RS41-SGP</li><li>Altitude: 4638.3m</li><li>Speed: 6.0km/h</li><li>Vertical rate: 5.0m/s</li><li>Heading: 95.5°</li><li>Status: Ascent</li><li>Pressure: 568.47hPa</li><li>Temperature: -17.27C</li><li>Humidity: 12.5%</li><li>Frequency: 402.700MHz</li></ul>
    </div>
    <i class="splitgrip"></i>
  </div>
  <svg class="grip" viewBox="0 0 30 30" width="30" height="30"><path d="M26 2h0M20 8h0M26 8h0M14 14h0M20 14h0M26 14h0M8 20h0M14 20h0M20 20h0M26 20h0M2 26h0M8 26h0M14 26h0M20 26h0M26 26h0"/></svg>
</section>

<!-- Radiosonde feature window -->
<section class="win win-sonde">
  <header class="titlebar">
    <span class="badge gray">F:1</span><b class="tb gearbtn"><svg class="big"><use href="#gear"/></svg></b><h2>Radiosonde</h2>
    <nav class="tools"><b class="tb"><svg><use href="#help"/></svg></b><b class="tb"><svg><use href="#export"/></svg></b><b class="tb"><svg class="big"><use href="#shrink"/></svg></b><b class="tb"><svg class="big"><use href="#expand"/></svg></b><b class="tb"><svg><use href="#close"/></svg></b></nav>
  </header>
  <div class="panel">
    <h3 class="fold">Radiosondes</h3>
    <div class="sondes">
      <div class="view">
      <table>
        <colgroup><col class="c0"><col class="c1"><col class="c2"><col class="c3"><col class="c4"><col class="c5"><col class="c6"><col class="c7"><col class="c8"><col class="c9"><col class="c10"><col class="c11"><col class="c12"></colgroup>
        <thead><tr><th></th><th>Serial</th><th>Type</th><th>Lat (°)</th><th>Lon (°)</th><th>Alt (m)</th><th>Spd (km/h)</th><th>VR (m/s)</th><th>Hd (°)</th><th>Status</th><th>P (hPa)</th><th>T (C)</th><th class="cut">U (%)</th></tr></thead>
        <tbody><tr><th>1</th><td>V2930794</td><td>RS41-SGP</td><td>53.64360</td><td>10.11875</td><td>463…</td><td>6.0</td><td>5.0</td><td>95.5</td><td>Ascent</td><td>568.47</td><td>-17.27</td><td>12.5</td></tr></tbody>
      </table>
      </div>
      <div class="hbar"><b class="al"></b><b class="thumb"></b><b class="ar"></b></div>
    </div>
    <i class="splitgrip"></i>
    <div class="row row-axes"><label>Y1</label><span class="combo">Altitude</span><label class="y2">Y2</label><span class="combo">Temperature</span><b class="btn w54"><svg><use href="#trash"/></svg></b></div>
    <svg class="chart" viewBox="1301 1556 1256 274" width="1256" height="274">
      <g transform="translate(1285 1440) scale(.8214 .33333)" class="geo" fill="none">
        <path d="M168 402h1254M168 561h1254M168 720h1254M168 879h1254M180 402v665" stroke="#85858b" stroke-width="2"/>
        <path d="M488 402v665M796 402v665M1104 402v665M1411 402v665" stroke="#85858b" stroke-width="1.500"/>
        <path d="M168 1038h1254" stroke="#85858b" stroke-width="4"/><path d="M179 402v636M1411 402v636" stroke="#85858b" stroke-width="4"/>
        <path d="M168 402h12M168 561h12M168 720h12M168 879h12M1411 402h12M1411 561h12M1411 720h12M1411 879h12" stroke="#85858b" stroke-width="4"/>
        <path stroke="#3aad66" stroke-width="4" stroke-linejoin="round" d="M180 1038L250 995 300 973 340 950 410 918 487 880 535 858 580 835 605 826 640 803 690 775 745 750 797 720 860 690 930 652 1000 617 1050 592 1103 562 1170 527 1280 473 1330 443 1365 430 1385 412 1411 402"/>
        <path stroke="#3a80a8" stroke-width="4" stroke-linejoin="round" d="M180 402L205 406 225 425 275 458 335 507 345 510 385 532 395 528 440 555 480 577 497 577 535 608 572 632 590 635 610 650 635 680 670 708 690 718 715 724 745 742 785 770 805 773 825 782 855 800 885 810 912 820 930 800 945 803 980 830 1000 835 1050 870 1065 873 1080 886 1090 884 1100 892 1140 910 1165 910 1240 931 1255 930 1285 938 1325 977 1365 1000 1385 1022 1411 1037"/>
      </g>
      <g text-anchor="end"><text x="1421" y="1582">4638.3</text><text x="1421" y="1636">4141.6</text><text x="1421" y="1688">3645.0</text><text x="1421" y="1742">3148.3</text><text x="1421" y="1794">2651.7</text></g>
      <g><text x="2453" y="1582">-6.8</text><text x="2453" y="1636">-9.4</text><text x="2453" y="1688">-12.0</text><text x="2453" y="1742">-14.7</text><text x="2453" y="1794">-17.3</text></g>
      <g text-anchor="middle"><text x="1431" y="1818">06-03-2024 11:53</text><text x="1685" y="1818">06-03-2024 11:54</text><text x="1937" y="1818">06-03-2024 11:56</text><text x="2191" y="1818">06-03-2024 11:57</text><text x="2443" y="1818">06-03-2024 11:59</text>
      <text class="axis" transform="translate(1331 1680) rotate(-90)">Altitude (m)</text><text class="axis" transform="translate(2541 1678) rotate(-90)">Temperature (°C)</text></g>
    </svg>
  </div>
  <svg class="grip" viewBox="0 0 30 30" width="30" height="30"><path d="M26 2h0M20 8h0M26 8h0M14 14h0M20 14h0M26 14h0M8 20h0M14 20h0M20 20h0M26 20h0M2 26h0M8 26h0M14 26h0M20 26h0M26 26h0"/></svg>
</section>
</main>
<script src="plot.js"></script>
</body>
</html>
```
FILE: styles.css
```css
*{box-sizing:border-box}
body{margin:0;background:#282828;color:#fff;font:24px/28px "Liberation Sans",Arial,sans-serif;overflow:hidden}
h2,h3{margin:0;font:inherit}
b,i,em{font-style:normal;font-weight:normal}
svg{display:block;flex:none}
.defs{position:absolute}
.desktop{position:relative;width:2573px;height:1887px;overflow:hidden}
.win{position:absolute;display:flex;flex-direction:column;border:2px solid #e07c00;padding:0 2px;background:#222}
.win-spectrum{left:3px;top:4px;width:1284px;height:906px}
.win-demod{left:1289px;top:4px;width:1280px;height:900px}
.win-map{left:5px;top:910px;width:1280px;height:974px}
.win-sonde{left:1289px;top:906px;width:1280px;height:976px}
.panel{background:#404040}

/* title bars */
.titlebar{height:42px;flex:none;display:flex;align-items:center;padding-top:2px;background:#222}
.titlebar.light{background:#404040}
.badge{height:32px;display:flex;align-items:center;justify-content:center;width:80px}
.badge.green{background:#008000;width:64px}
.badge.purple{background:#690069;width:100px}
.badge.gray{background:#858585}
.titlebar h2{margin-left:2px;white-space:nowrap}
.titlebar h2.gap-l{margin-left:10px}
.gearbtn{margin-left:2px}
.tools{margin-left:auto;display:flex;gap:4px;padding-right:2px}
.tb{width:36px;height:36px;display:flex;align-items:center;justify-content:center;border:1px solid #2c2c2c;border-radius:5px;background:linear-gradient(#585858,#464646);box-shadow:inset 0 0 0 2px #6a6a6a}
.tb svg{width:29px;height:29px}
.tb svg.big{width:33px;height:33px}

/* generic controls */
.btn{position:relative;width:46px;height:46px;flex:none;display:flex;align-items:center;justify-content:center;border:2px solid #2e2e2e;border-radius:6px;background:linear-gradient(#5a5a5a,#484848);box-shadow:inset 0 0 0 1.5px #6b6b6b}
.btn.on{background:#b0732b;border-color:#7b4500;box-shadow:inset 0 0 0 1.5px #c48745}
.btn svg{width:28px;height:28px}
.btn svg.lg,.btn svg.sw{width:32px;height:32px}
.w48{width:48px}.w54{width:54px}
.combo{position:relative;height:44px;display:flex;align-items:center;padding-left:8px;border:2px solid #2e2e2e;border-radius:6px;background:linear-gradient(#5a5a5a,#4a4a4a);box-shadow:inset 0 0 0 1.5px #6b6b6b;white-space:nowrap}
.combo::after{content:"";margin-left:auto;margin-right:11px;border:8px solid transparent;border-top:9px solid #c0c0c0;border-bottom:0}
.combo.w156{width:156px}.combo.w158{width:158px}.combo.up{margin-top:-2px}
.spin{display:flex;align-items:center;justify-content:flex-end;height:42px;border:2px solid #3a3a3a;border-radius:5px;background:#4c4c4c}
.spin i{width:28px;height:100%;margin-left:12px;border-left:2px solid #383838;border-radius:0 4px 4px 0;background:linear-gradient(#707070,#5c5c5c);display:flex;flex-direction:column;align-items:center;justify-content:space-evenly}
.spin i::before,.spin i::after{content:"";border:8px solid transparent}
.spin i::before{border-bottom:8px solid #ccc;border-top:0}
.spin i::after{border-top:8px solid #ccc;border-bottom:0}
.spin.dn-off i::after{border-top-color:#909090}
.spin.up-off i::before{border-bottom-color:#909090}
.input{height:44px;display:flex;align-items:center;padding-left:4px;border:2px solid #2e2e2e;border-radius:6px;background:#191919}
.knob{position:relative;display:block;width:34px;height:34px;margin-left:8px;border-radius:50%;background:radial-gradient(circle at 50% 45%,#c4c4c4,#ababab 70%,#a0a0a0);box-shadow:2px 3px 3px 1px #303030}
.knob::after{content:"";position:absolute;left:6px;bottom:7px;width:9px;height:9px;border-radius:50%;border:2px solid #7c7c7c;background:#a4a4a4}
.knob.mid::after{left:9px;bottom:6px}
.knob.top::after{left:12px;bottom:20px}
.knob.center{justify-self:center;margin:0}
.grip{position:absolute;right:1px;bottom:1px}
.grip path{stroke:#8a8a8a;stroke-width:4;stroke-linecap:square;stroke-width:3}
.splitgrip{display:block;width:34px;height:4px;margin:2px auto 0;background:repeating-linear-gradient(90deg,#888 0 4px,transparent 4px 6px)}

/* section headers */
.fold{position:relative;height:38px;margin:0 2px;padding:4px 0 0 30px;border-bottom:2px solid #7a7a7a;box-shadow:inset 0 -2px #2a2a2a;line-height:28px}
.fold::before{content:"";position:absolute;left:4px;top:7px;border:12px solid transparent;border-top:22px solid #fff;border-bottom:0}
.fold.split{border-top:2px solid #cc7300;height:36px;padding-top:0}
.fold.split::before{top:3px}
.fold.shut{height:34px;border-bottom:0;box-shadow:none}
.fold.shut::before{border:11px solid transparent;border-left:24px solid #fff;border-right:0}
.row{display:flex;align-items:center;padding:0 9px}
.row label{flex:none}
hr{height:4px;margin:0 9px 0 8px;border:0;background:linear-gradient(#2a2a2a 0 1px,#7a7a7a 1px 3px,transparent 3px)}
.vline{width:2px;background:#777;border-left:1px solid #555}

/* spectrum window */
.plot{display:grid;height:682px;flex:none;background:#000}
.plot>*{grid-area:1/1}
.plot-axes text{fill:#bcb9c0;font-size:23.700px}
.spectrum-controls{height:178px;padding:2px 0 0 5px}
.ctl{display:grid;align-items:center;justify-content:start}
.ctl-1{height:50px;grid-template-columns:46px 54px 50px 58px 50px 48px 50px 50px 67px 49px 48px 47px 49px 160px 48px 48px 48px 158px}
.ctl-2{height:50px;grid-template-columns:138px 98px 118px 98px 124px 46px 98px 88px 108px 46px;column-gap:4px}
.ctl-2 .scale{width:108px}
.ctl-3{height:48px;grid-template-columns:49px 47px 49px 55px 56px 48px 47px}
.d3{position:absolute;left:8px;top:3px;font:bold 22px/22px "DejaVu Sans",sans-serif;letter-spacing:-2px}

/* demodulator window */
.row-freq{height:82px;padding-top:4px}
.row-freq label{width:37px}
.wheel{width:303px;height:63px;display:flex;border-top:2px solid #0c0c0c;border-left:1px solid #111;border-bottom:2px solid #555;border-right:2px solid #555;background:#2b2b2b;font:30px/62px "DejaVu Sans",sans-serif;color:#ffcb88;overflow:hidden}
.wheel span{position:relative;width:30px;padding-left:1px;text-align:center;border-right:1px solid #6b4a26;background:linear-gradient(#1b1b1b,#3a3a3a 50%,#1b1b1b);box-shadow:inset -2px 0 #222;overflow:hidden}
.wheel .plain{border-color:#222;font-size:28px}
.wheel span::before,.wheel span::after{position:absolute;left:1px;right:0;opacity:.5}
.wheel span[data-up]::before{content:attr(data-up);top:-38px}
.wheel span[data-down]::after{content:attr(data-down);top:37px}
.unit{margin-left:8px}
.row-freq .vline{height:62px;margin-left:13px}
.power{margin-left:auto}
.row-meter{height:54px;align-items:flex-start}
.row-meter label{padding-top:10px;width:36px}
.meter text{fill:#ddd;font-size:21.500px}
.row-bw{height:62px;padding-top:2px}
.row-bw label{width:49px}
.slider{position:relative;width:424px;height:10px;border:2px solid #2e2e2e;border-radius:3px;background:linear-gradient(90deg,#ffa22e 0 90px,#4a4a4a 90px)}
.slider.s2{background:linear-gradient(90deg,#ffa22e 0 140px,#4a4a4a 140px)}
.slider i{position:absolute;left:86px;top:-9px;width:25px;height:24px;border:2px solid #2a2a2a;border-radius:6px;background:#666;box-shadow:inset 0 0 0 1px #888}
.slider.s2 i{left:137px}
.val{width:76px;padding-left:22px}
.row-bw .vline{height:46px}
.row-bw label.dev{width:52px;margin-left:9px}
.row-bw label.th{width:38px;margin-left:8px}
.row-bw .knob{margin-left:6px}
.thv{margin-left:auto}
.row-udp{height:58px;padding-top:2px}
.row-udp label{width:57px}
.check{width:28px;height:28px;border:2px solid #303030;background:#191919}
.ip{width:521px;margin-left:7px}
.colon{width:22px;padding-left:8px}
.port{width:98px}
.row-find{height:62px;padding-top:1px}
.row-find label{width:54px}
.row-find .input{width:488px}
.actions{margin-left:auto;display:flex;gap:8px}
.frames{width:1252px;height:354px;margin:10px 0 10px 10px;border:1px solid #2e2e2e;display:grid;grid-template-columns:1221px 29px;grid-template-rows:325px 27px}
.view{overflow:hidden;background:#191919;border-top:1px solid #666}
table{table-layout:fixed;border-collapse:separate;border-spacing:0;white-space:nowrap}
th{font-weight:400;padding:0;overflow:hidden}
thead th{height:36px;text-align:center;background:linear-gradient(#555,#484848);border-right:2px solid #666;border-bottom:3px solid #333;box-shadow:inset 1px 0 #333}
td{height:60px;padding:0 0 3px 7px;border-right:1px solid #3a3a3a;border-bottom:2px solid #343434;overflow:hidden}
tbody th{height:60px;background:#4a4a4a;border-bottom:3px solid #2e2e2e;border-right:2px solid #666;border-top:1px solid #666}
.frames table{width:1249px}
.frames .c0{width:50px}.frames .c1{width:143px}.frames .c2{width:109px}.frames .c3{width:124px}.frames .c4{width:82px}.frames .c5{width:104px}.frames .c6{width:124px}.frames .c7{width:136px}.frames .c8{width:102px}.frames .c9{width:132px}.frames .c10{width:106px}.frames .c11{width:37px}
.frames thead th:nth-child(-n+9):not(:nth-child(5)){padding-left:4px}
.frames thead th:nth-child(5),.frames thead th:nth-child(10),.frames thead th:nth-child(11){padding-left:3px}
.cut{text-align:left;padding-left:7px}
.vbar,.hbar{display:flex;background:#484848}
.vbar{flex-direction:column}
.vbar b,.hbar b{display:flex;align-items:center;justify-content:center;border:2px solid #626262;outline:1px solid #333;outline-offset:0;background:linear-gradient(#505050,#464646)}
.vbar .au{height:26px}.vbar .ad{height:27px;margin-top:auto}
.vbar .thumb{height:52px;margin-top:181px}
.hbar{width:1221px}
.hbar b{height:26px}
.hbar .al,.hbar .ar{width:26px}.hbar .ar{margin-left:auto}
.hbar .thumb{width:249px;margin-left:2px}
.au::before,.ad::before,.al::before,.ar::before{content:"";border:8px solid transparent}
.au::before{border-bottom-color:#bbb;border-top:0}.ad::before{border-top-color:#bbb;border-bottom:0}
.al::before{border-right-color:#bbb;border-left:0}.ar::before{border-left-color:#bbb;border-right:0}
footer{display:flex;height:42px;align-items:center;gap:4px;padding:0 0 2px 2px}
footer span{margin-left:45px}

/* map window */
.row-mapfind{height:60px}
.row-mapfind label{width:54px}
.row-mapfind .input{width:199px}
.row-mapfind .combo{width:401px;margin-left:7px}
.row-mapfind .combo span{width:348px;overflow:hidden}
.row-mapfind .combo::after{margin-right:12px}
.mm{font:500 33px/34px Roboto,sans-serif}
.ibp{font:19px/24px "DejaVu Sans Mono",monospace;letter-spacing:-1px}
.map{position:relative;width:1264px;height:736px;margin:4px 0 0 4px;overflow:hidden}
.win-map .panel{height:886px}
.geo path{vector-effect:non-scaling-stroke}
.park{fill:#d1e6bf}.wood{fill:#b5e69c}.khaki{fill:#dbe0bf}.aero{fill:#d6d9e4}.pink{fill:#ecd5dc}
.sea{fill:#76cff0}
.chan{fill:none;stroke:#76cff0}
.river{fill:none;stroke:#5aaee0;stroke-width:1.500}
.minor{fill:none;stroke:#fff;stroke-width:1.500;stroke-linejoin:round;opacity:.85}
.roads{fill:none;stroke:#fff;stroke-width:2.500;stroke-linejoin:round}
.roads .wide{stroke-width:4.500}
.yel{fill:none;stroke:#f2d263;stroke-width:4;stroke-linejoin:round}
.moto{fill:none;stroke:#fca564;stroke-width:4.500;stroke-linejoin:round}
.case{stroke:#fff;stroke-width:7}
.border{fill:none;stroke:#9799ab;stroke-width:2.200;stroke-dasharray:26 3}
.towns text,.city,.airport{font-family:Roboto,sans-serif;fill:#2a2a2e;stroke:#fff;stroke-width:3;stroke-linejoin:round;paint-order:stroke;font-size:26px}
.towns.small text{font-size:22px}
.city{font-size:39px;font-weight:500;fill:#111}
.airport{fill:#4353b5;font-size:24px;font-weight:500}
.plane{fill:#4460cc;stroke:#fff;stroke-width:.5}
.shield text{fill:#fff;font:700 18px Roboto,sans-serif;text-anchor:middle}
.shield text.dark{fill:#222}
.credit text{fill:#2ab0a8;fill-opacity:.85;font-size:24px}
.credit .dash{fill:#333}
.callout{position:absolute;left:955px;top:116px;width:173px;height:203px;margin:0;padding:3px 0 0 1px;list-style:none;border:1.500px solid #1c2a1c;border-radius:7px;background:#8fee90;color:#111;font-size:15px;line-height:17.800px;white-space:nowrap}

/* radiosonde window */
.win-sonde .panel{height:888px}
.sondes{width:1256px;height:491px;margin:8px 0 0 8px;border:1px solid #2e2e2e;display:grid;grid-template-rows:462px 27px}
.sondes .view{background:linear-gradient(90deg,#404040 0 23px,#191919 23px)}
.sondes thead th{height:35px}
.sondes th{font-weight:700}
.sondes table{width:1283px}
.sondes .hbar{width:1254px}
.sondes .hbar .thumb{width:532px}
.sondes .c0{width:23px}.sondes .c1{width:136px}.sondes .c2{width:134px}.sondes .c3{width:136px}.sondes .c4{width:136px}.sondes .c5{width:84px}.sondes .c6{width:132px}.sondes .c7{width:107px}.sondes .c8{width:73px}.sondes .c9{width:91px}.sondes .c10{width:92px}.sondes .c11{width:85px}.sondes .c12{width:54px}
.sondes thead th:nth-child(n+2){padding-left:3px}
.sondes td{background:#ff8c00;color:#111;border-right:2px solid #2a2a2a;padding-left:6px}
.win-sonde .splitgrip{margin-top:3px;margin-left:622px}
.row-axes{height:52px}
.row-axes label{width:42px}
.row-axes .combo{width:545px}
.row-axes .combo::after{margin-right:13px}
.row-axes label.y2{width:42px;margin-left:13px}
.row-axes .btn{margin-left:auto}
.chart{margin:10px 0 0 8px;border-radius:10px;background:linear-gradient(#2f313c,#121217)}
.chart text{fill:#fff;font-size:23.800px}
.chart .axis{font-weight:700;font-size:24px}
```
FILE: plot.js
```js
const canvas = document.getElementById('plot');
const ctx = canvas.getContext('2d');
let seed = 90210;
const rnd = () => {
  seed ^= seed << 13; seed ^= seed >>> 17; seed ^= seed << 5;
  return (seed >>> 0) / 4294967296;
};

// Waterfall: one value per bin and line, mapped from navy through teal to green
const X0 = 66, Y0 = 324, W = 1170, H = 337;
const image = ctx.createImageData(W, H);
const bands = [[57,72,.28],[72,90,.42],[90,100,.15],[100,108,.28],[108,116,.08],[116,124,.35],
  [183,190,.2],[190,200,.18],[200,208,.08],[208,222,.38],[222,232,.25],[240,246,.15],[246,250,.05],[308,318,.38],[318,330,.1]];
let above = new Float32Array(W).map(rnd);
for (let y = 0; y < H; y++) {
  const line = new Float32Array(W);
  let prev = rnd();
  for (let x = 0; x < W; x++) {
    const n = rnd();
    const v = n * .55 + prev * .2 + above[x] * .25;
    prev = n;
    line[x] = n;
    const edge = Math.min(1, .8 + Math.min(x, W - x) / 400);
    const t = Math.max(0, Math.min(1, (v - .12) * 1.45)) * edge;
    let r = 0, g = 18 + 66 * t, b = 46 + 28 * t;
    if (x > 553 && x < 646) {
      for (const [a, z, k] of bands) if (y >= a && y < z) {
        const m = k + rnd() * .2;
        g += (125 - g) * m * 1.2; b += (20 - b) * m;
      }
      if ((x < 556 || x > 643) && (y < 6 || (y > 56 && y < 132) || (y > 182 && y < 258) || y > 307)) { g = 105; b = 50; }
    }
    if (x > 598 && x < 602 && (y < 8 || (y > 118 && y < 132) || (y > 246 && y < 258))) { g = 115; b = 35; }
    if (x === 36 || x === 37) { g = 82; b = 72; }
    if (x === 584 || x === 585) { r = 20; g = 145; b = 10; }
    const i = (y * W + x) * 4;
    image.data[i] = r; image.data[i + 1] = g; image.data[i + 2] = b; image.data[i + 3] = 255;
  }
  above = line;
}
ctx.putImageData(image, X0, Y0);

// Spectrum trace, in dB from 0 at the top to -100 at the bottom
ctx.strokeStyle = '#9a9a34';
ctx.lineWidth = 1;
ctx.beginPath();
const peaks = { 36: -67, 584: -48, 598: -62, 642: -66, 554: -69, 684: -69, 808: -70 };
const spikes = { 346: -100, 448: -100, 528: -100, 548: -100, 802: -100, 460: -98, 874: -97, 1014: -99, 632: -97, 1140: -96, 904: -97 };
for (let x = 0; x <= W; x += 2) {
  let db = -72 - 11 * rnd();
  if (rnd() < .22) db = -80 - 12 * rnd();
  if (rnd() < .05) db = -87 - 6 * rnd();
  if (peaks[x] !== undefined) db = peaks[x];
  if (spikes[x] !== undefined) db = spikes[x];
  const y = 43.5 - db * 1.94;
  x ? ctx.lineTo(X0 + x + .5, y) : ctx.moveTo(X0 + .5, y);
}
ctx.stroke();
```
